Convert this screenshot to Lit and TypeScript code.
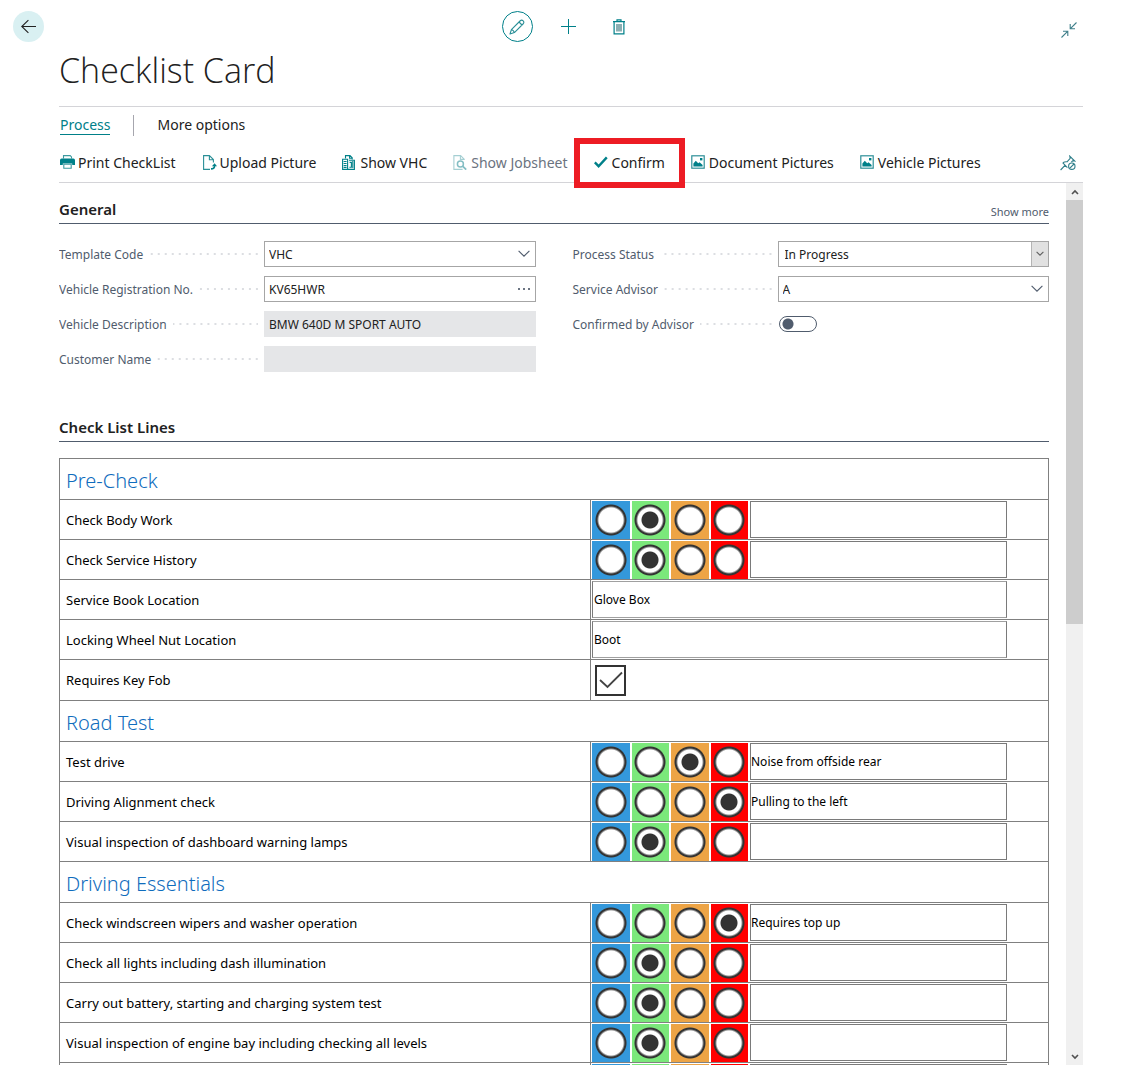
import { LitElement, html, css, TemplateResult } from "lit";
import { customElement, property, query } from "lit/decorators.js";
import { classMap } from "lit/directives/class-map.js";

const icons: Record<string, TemplateResult> = {
  back: html`<svg width="16" height="16" viewBox="0 0 16 16" fill="none" stroke="#222" stroke-width="1.1"><path d="M15 7.5H.8M7.4 1.2L.8 7.5L7.4 13.8" /></svg>`,
  pencil: html`<svg width="16" height="16" viewBox="0 0 16 16" fill="none" stroke="#2a8f97" stroke-width="1.1" stroke-linejoin="round"><path d="M1 15L2.4 10.6L11 2Q12.6 .4 14.2 1.8Q15.6 3.4 14 5L5.4 13.6ZM2.4 10.6Q4.6 11.4 5.4 13.6M10 3L13 6" /></svg>`,
  plus: html`<svg width="15" height="15" viewBox="0 0 15 15" stroke="#008089" stroke-width="1"><path d="M0 7.5H15M7.5 0V15" /></svg>`,
  trash: html`<svg width="13" height="16" viewBox="0 0 13 16" fill="none" stroke="#008089" stroke-width="1.2"><path d="M0 2.6H12M4 2.4V.8H8V2.4M1.1 3V14.9H10.9V3" /><path d="M4 5V12.4M6 5V12.4M8 5V12.4" stroke="#6f9ba0" stroke-width="1.6" /></svg>`,
  collapse: html`<svg width="16" height="16" viewBox="0 0 16 16" fill="none" stroke="#3f7f8a" stroke-width="1.1"><path d="M15.5 .5L9.4 6.6M9.2 2V6.8H14M.5 15.5L6.6 9.4M2 9.2H6.8V14" /></svg>`,
  print: html`<svg width="15" height="15" viewBox="0 0 15 15" fill="#008089"><path d="M3.5 3.5V.6H10.2L11.5 1.9V3.5" fill="none" stroke="#3d9aa0" stroke-width="1.1" /><path d="M1.6 3.6H13.4Q15 3.6 15 5.2V10H12.2V8.6H2.8V10H0V5.2Q0 3.6 1.6 3.6Z" /><path d="M3.8 9.2H11.2V13.2H3.8Z" fill="#fff" stroke="#3d9aa0" stroke-width="1.1" /></svg>`,
  upload: html`<svg width="15" height="15" viewBox="0 0 15 15" fill="none" stroke="#2a8f97" stroke-width="1.1"><path d="M8 14.4H1.6V.6H7.4L11.4 4.6V7.6M7.4 .8V4.8H11.2" /><path d="M9 13.9Q12.6 13.9 12.6 10.4" stroke="#008089" stroke-width="1.6" /><path d="M9.9 11.3L12.6 8.2L15 11.3Z" fill="#008089" stroke="none" /></svg>`,
  report: html`<svg width="15" height="15" viewBox="0 0 15 15" fill="none" stroke="#008089" stroke-width="1.1"><path d="M3.5 3.4V.6H8L10.2 2.8V4.4M7.6 .8V3.2H10" /><path d="M.6 4.2H5.6V14.4H.6Z" /><path d="M1.6 6.5H4.6M1.6 8.5H4.6M1.6 10.5H4.6M1.6 12.4H4.6" /><path d="M7 5.2H12.4V14.4H5.6M7.6 7.4H9.4V12.2H7.4M10.8 6V13" /></svg>`,
  preview: html`<svg width="15" height="15" viewBox="0 0 15 15" fill="none" stroke="#a5cfd3" stroke-width="1.1"><path d="M11.2 5V4.2L7.6 .6H.9V14.4H9.6M7.4 .8V4.4H11" /><circle cx="7.4" cy="9" r="3" stroke="#84bec4" stroke-width="1.5" /><path d="M9.6 11.2L13.2 14.6" stroke="#84bec4" stroke-width="1.8" /></svg>`,
  check: html`<svg width="15" height="15" viewBox="0 0 15 15" fill="none" stroke="#008089" stroke-width="2.4"><path d="M.8 7.4L4.6 11.2L12.8 2.4" /></svg>`,
  picture: html`<svg width="15" height="15" viewBox="0 0 15 15"><rect x=".8" y=".8" width="12.4" height="12.4" fill="#fff" stroke="#2d8f98" stroke-width="1.2" /><path d="M2.4 11.4V8.4L4.8 5.8L7.2 8.2L8.6 7.2L11.6 10V11.4Z" fill="#008089" /><rect x="9" y="3" width="2.4" height="2.4" fill="#008089" /></svg>`,
  pin: html`<svg width="16" height="16" viewBox="0 0 16 16" fill="none" stroke="#2f7f8a" stroke-width="1.1"><path d="M.6 15L5 10.4M2.6 7.6L7.4 12.6M2.8 7.8Q5 6.4 7 6.8L10.2 3.4L9.8 1.2L14.6 6L12.6 5.8L11.4 7.2" /><circle cx="11.8" cy="11.2" r="3.2" /><path d="M9.6 13.4L14 9" /></svg>`,
  chevron: html`<svg width="12" height="8" viewBox="0 0 12 8" fill="none" stroke="#505c6d" stroke-width="1.1"><path d="M.6 .8L6 6.2L11.4 .8" /></svg>`,
  smallChevron: html`<svg width="8" height="6" viewBox="0 0 8 6" fill="none" stroke="#606060" stroke-width="1.1"><path d="M.6 .8L4 4.2L7.4 .8" /></svg>`,
  dots: html`<svg width="12" height="2" viewBox="0 0 12 2" fill="#6b7482"><path d="M0 0H2V2H0ZM5 0H7V2H5ZM10 0H12V2H10Z" /></svg>`,
  scrollUp: html`<svg width="8" height="6" viewBox="0 0 8 6" fill="none" stroke="#505050" stroke-width="1.6"><path d="M1 5L4 2L7 5" /></svg>`,
  scrollDown: html`<svg width="8" height="6" viewBox="0 0 8 6" fill="none" stroke="#505050" stroke-width="1.6"><path d="M1 1L4 4L7 1" /></svg>`,
};

interface Action {
  icon: string;
  label: string;
  disabled?: boolean;
  marked?: boolean;
}

const actions: Action[] = [
  { icon: "print", label: "Print CheckList" },
  { icon: "upload", label: "Upload Picture" },
  { icon: "report", label: "Show VHC" },
  { icon: "preview", label: "Show Jobsheet", disabled: true },
  { icon: "check", label: "Confirm", marked: true },
  { icon: "picture", label: "Document Pictures" },
  { icon: "picture", label: "Vehicle Pictures" },
];

type Line =
  | { kind: "rating"; label: string; value: number; note?: string }
  | { kind: "text"; label: string; value: string }
  | { kind: "tick"; label: string; value: boolean };

interface Section {
  title: string;
  lines: Line[];
}

const sections: Section[] = [
  {
    title: "Pre-Check",
    lines: [
      { kind: "rating", label: "Check Body Work", value: 1 },
      { kind: "rating", label: "Check Service History", value: 1 },
      { kind: "text", label: "Service Book Location", value: "Glove Box" },
      { kind: "text", label: "Locking Wheel Nut Location", value: "Boot" },
      { kind: "tick", label: "Requires Key Fob", value: true },
    ],
  },
  {
    title: "Road Test",
    lines: [
      { kind: "rating", label: "Test drive", value: 2, note: "Noise from offside rear" },
      { kind: "rating", label: "Driving Alignment check", value: 3, note: "Pulling to the left" },
      { kind: "rating", label: "Visual inspection of dashboard warning lamps", value: 1 },
    ],
  },
  {
    title: "Driving Essentials",
    lines: [
      { kind: "rating", label: "Check windscreen wipers and washer operation", value: 3, note: "Requires top up" },
      { kind: "rating", label: "Check all lights including dash illumination", value: 1 },
      { kind: "rating", label: "Carry out battery, starting and charging system test", value: 1 },
      { kind: "rating", label: "Visual inspection of engine bay including checking all levels", value: 1 },
      { kind: "rating", label: "", value: -1 },
    ],
  },
];

const ratings = ["blue", "green", "amber", "red"];

@customElement("check-lines")
class CheckLines extends LitElement {
  @property({ attribute: false }) sections: Section[] = [];

  static styles = css`
    :host {
      display: block;
    }
    .lines {
      width: 100%;
      border-collapse: collapse;
      table-layout: fixed;
      font: 13px "Noto Sans", "Open Sans", sans-serif;
      color: #000;
    }
    .answers {
      width: 458px;
    }
    th,
    td {
      box-sizing: border-box;
      height: 40px;
      padding: 0 0 0 6px;
      border: 1px solid #808080;
      text-align: left;
      font-weight: 400;
    }
    .section {
      height: 41px;
      padding-top: 2px;
      font: 300 20px "Noto Sans", "Open Sans", sans-serif;
      color: #0f6cbd;
    }
    .answer {
      padding: 0 41px 0 1px;
    }
    .tick-cell {
      height: 41px;
      padding: 0 0 0 4px;
    }
    .group {
      display: flex;
      gap: 2px;
    }
    .ratings {
      display: flex;
      gap: 2px;
      width: 156px;
    }
    .swatch {
      display: grid;
      flex: 1;
      place-items: center;
      height: 38px;
    }
    .blue {
      background: #3498db;
    }
    .green {
      background: #7be87b;
    }
    .amber {
      background: #eda445;
    }
    .red {
      background: #f00;
    }
    .radio {
      appearance: none;
      width: 32px;
      height: 32px;
      margin: 0;
      background: radial-gradient(circle, #fff 12px, #333 14px, #333 15px, transparent 16px);
    }
    .radio:checked {
      background: radial-gradient(circle, #333 8px, #fff 9px, #fff 12px, #333 14px, #333 15px, transparent 16px);
    }
    .note {
      box-sizing: border-box;
      width: 100%;
      min-width: 0;
      height: 37px;
      padding: 0 1px;
      border: 1px solid #7a7a7a;
      border-radius: 0;
      background: #fff;
      font: 12px "Noto Sans", "Open Sans", sans-serif;
      color: #000;
    }
    .group .note {
      flex: 1;
      width: auto;
      padding: 0;
    }
    .wide {
      display: block;
      border-color: #a0a0a0 #7a7a7a;
    }
    .tick {
      display: block;
      appearance: none;
      box-sizing: border-box;
      width: 31px;
      height: 31px;
      margin: 0;
      border: 2px solid #333;
      background: #fff;
    }
    .tick-box {
      display: grid;
      width: 31px;
    }
    .tick-box > * {
      grid-area: 1 / 1;
    }
    .tick-mark {
      visibility: hidden;
      pointer-events: none;
    }
    .tick:checked + .tick-mark {
      visibility: visible;
    }
  `;

  private renderAnswer(line: Line, id: string) {
    if (line.kind === "rating") {
      return html`<td class="answer">
        <div class="group">
          <div class="ratings" role="radiogroup" aria-label=${line.label}>
            ${ratings.map(
              (name, i) => html`<label class="swatch ${name}">
                <input class="radio" type="radio" name=${id + "-rating"} aria-label=${name} ?checked=${line.value === i} />
              </label>`
            )}
          </div>
          <input class="note" id=${id} type="text" .value=${line.note ?? ""} />
        </div>
      </td>`;
    }
    if (line.kind === "text") {
      return html`<td class="answer"><input class="note wide" id=${id} type="text" .value=${line.value} /></td>`;
    }
    return html`<td class="tick-cell">
      <div class="tick-box">
        <input class="tick" id=${id} type="checkbox" ?checked=${line.value} />
        <svg class="tick-mark" width="31" height="31" viewBox="0 0 31 31" fill="none" stroke="#444" stroke-width="1.8">
          <path d="M5 15L12.5 22L27 7.5" />
        </svg>
      </div>
    </td>`;
  }

  render() {
    return html`<table class="lines">
      <colgroup>
        <col />
        <col class="answers" />
      </colgroup>
      ${this.sections.map(
        (section, s) => html`<tbody>
          <tr>
            <th class="section" colspan="2" scope="rowgroup">${section.title}</th>
          </tr>
          ${section.lines.map((line, l) => {
            const id = `line-${s}-${l}`;
            return html`<tr>
              <td><label for=${id}>${line.label}</label></td>
              ${this.renderAnswer(line, id)}
            </tr>`;
          })}
        </tbody>`
      )}
    </table>`;
  }
}

@customElement("app-root")
class AppRoot extends LitElement {
  @query(".content") private content!: HTMLElement;

  static styles = css`
    :host {
      display: flex;
      flex-direction: column;
      box-sizing: border-box;
      height: 100vh;
      overflow: hidden;
      background: #fff;
      color: #212121;
      font-family: "Noto Sans", "Open Sans", sans-serif;
    }
    button {
      display: flex;
      align-items: center;
      padding: 0;
      border: 0;
      background: none;
      font: inherit;
      color: inherit;
      cursor: pointer;
    }
    svg {
      display: block;
      flex: none;
    }
    .topbar {
      display: grid;
      grid-template-columns: 1fr auto 1fr;
      align-items: center;
      padding: 11px 63px 0 13px;
    }
    .round,
    .tool {
      justify-content: center;
      width: 31px;
      height: 31px;
    }
    .round {
      border-radius: 50%;
      background: #d9f0f2;
    }
    .tools {
      display: flex;
      gap: 20px;
      margin-left: 46px;
    }
    .editing {
      border: 1px solid #008089;
      border-radius: 50%;
    }
    .collapse {
      justify-self: end;
      padding-top: 6px;
    }
    .page {
      display: flex;
      flex: 1;
      flex-direction: column;
      min-height: 0;
      padding: 0 57px 0 59px;
    }
    h1 {
      margin: 0;
      padding: 4px 0 11px;
      border-bottom: 1px solid #d4d4d8;
      font: 300 34px/49px "Open Sans", "Noto Sans", sans-serif;
      color: #212121;
    }
    .tabs {
      display: flex;
      align-items: center;
      height: 36px;
      padding-left: 1px;
      gap: 23px;
      font-size: 14px;
    }
    .tab {
      border-bottom: 1px solid transparent;
      line-height: 19px;
    }
    .current {
      border-color: #008089;
      color: #008089;
    }
    .divider {
      width: 1px;
      height: 21px;
      background: #a6a6ae;
    }
    .actions {
      display: flex;
      align-items: center;
      height: 39px;
      padding: 0 7px 0 1px;
      gap: 26px;
      border-bottom: 1px solid #d4d4d8;
      font-size: 14px;
      line-height: 20px;
      white-space: nowrap;
    }
    .action {
      position: relative;
      gap: 3px;
    }
    .action:disabled {
      color: #6b7380;
      cursor: default;
    }
    .marked::after {
      content: "";
      position: absolute;
      inset: -15px -20px;
      border: 6px solid #ed1c24;
      pointer-events: none;
    }
    .pin {
      margin-left: auto;
    }
    .body {
      display: flex;
      flex: 1;
      min-height: 0;
      gap: 17px;
    }
    .content {
      flex: 1;
      min-width: 0;
      overflow-y: auto;
      scrollbar-width: none;
    }
    .heading {
      display: flex;
      align-items: center;
      justify-content: space-between;
      height: 22px;
      padding-bottom: 3px;
      border-bottom: 1px solid #505c6d;
    }
    .general {
      margin-top: 15px;
    }
    .list {
      margin: 44px 0 16px;
    }
    h2 {
      margin: 0;
      font: 600 15px/20px "Noto Sans", "Open Sans", sans-serif;
    }
    .more {
      padding-top: 4px;
      font-size: 11px;
      color: #505c6d;
    }
    .fields {
      display: grid;
      grid-template-columns: 1fr 1fr;
      column-gap: 37px;
      padding-top: 17px;
    }
    .column {
      display: flex;
      flex-direction: column;
      gap: 9px;
    }
    .field {
      display: grid;
      grid-template-columns: 205px 1fr;
      align-items: center;
      height: 26px;
      font-size: 12px;
    }
    .caption {
      display: flex;
      align-items: center;
      gap: 6px;
      padding-right: 6px;
      color: #505c6d;
      white-space: nowrap;
    }
    .caption::after {
      content: "";
      flex: 1;
      height: 2px;
      background: linear-gradient(90deg, transparent 5px, #dcdee2 5px) right / 7px 2px repeat-x;
    }
    .box {
      display: grid;
      grid-template-columns: 1fr auto;
      box-sizing: border-box;
      height: 26px;
      border: 1px solid #a6a6a6;
      background: #fff;
    }
    .box button {
      padding: 0 5px;
    }
    .value {
      box-sizing: border-box;
      width: 100%;
      min-width: 0;
      padding: 0 4px;
      border: 0;
      border-radius: 0;
      background: none;
      font: inherit;
      color: #212121;
    }
    .locked {
      height: 26px;
      padding: 0 5px;
      background: #e5e6e8;
    }
    .status {
      grid-area: 1 / 1 / 2 / 3;
      appearance: none;
      padding: 0 24px 0 6px;
    }
    .arrow {
      grid-area: 1 / 2;
      display: grid;
      place-items: center;
      width: 16px;
      border-left: 1px solid #b4b4b4;
      background: #e1e1e1;
      pointer-events: none;
    }
    .switch {
      appearance: none;
      box-sizing: border-box;
      width: 38px;
      height: 16px;
      margin: 0 1px;
      border: 1px solid #505c6d;
      border-radius: 8px;
      background: radial-gradient(circle at 8px 7px, #505c6d 5px, transparent 6px);
    }
    .switch:checked {
      background: radial-gradient(circle at 28px 7px, #505c6d 5px, transparent 6px);
    }
    .scrollbar {
      display: flex;
      flex-direction: column;
      width: 17px;
      background: #f0f0f0;
    }
    .scrollbar button {
      justify-content: center;
      height: 17px;
    }
    .track {
      flex: 1;
    }
    .thumb {
      height: 50%;
      background: #cdcdcd;
    }
  `;

  private scrollContent(by: number) {
    this.content.scrollBy({ top: by });
  }

  private renderAction(action: Action) {
    return html`<button class=${classMap({ action: true, marked: !!action.marked })} ?disabled=${!!action.disabled}>
      ${icons[action.icon]}<span>${action.label}</span>
    </button>`;
  }

  render() {
    return html`
      <header class="topbar">
        <button class="round" aria-label="Back">${icons.back}</button>
        <div class="tools">
          <button class="tool editing" aria-label="Edit">${icons.pencil}</button>
          <button class="tool" aria-label="New">${icons.plus}</button>
          <button class="tool" aria-label="Delete">${icons.trash}</button>
        </div>
        <button class="collapse" aria-label="Collapse">${icons.collapse}</button>
      </header>
      <main class="page">
        <h1>Checklist Card</h1>
        <nav class="tabs">
          <button class="tab current">Process</button>
          <span class="divider"></span>
          <button class="tab">More options</button>
        </nav>
        <div class="actions">
          ${actions.map((a) => this.renderAction(a))}
          <button class="pin" aria-label="Unpin">${icons.pin}</button>
        </div>
        <div class="body">
          <div class="content">
            <div class="heading general">
              <h2>General</h2>
              <button class="more">Show more</button>
            </div>
            <div class="fields">
              <div class="column">
                <div class="field">
                  <label class="caption" for="template">Template Code</label>
                  <div class="box">
                    <input class="value" id="template" type="text" value="VHC" />
                    <button aria-label="Choose template">${icons.chevron}</button>
                  </div>
                </div>
                <div class="field">
                  <label class="caption" for="registration">Vehicle Registration No.</label>
                  <div class="box">
                    <input class="value" id="registration" type="text" value="KV65HWR" />
                    <button aria-label="Look up vehicle">${icons.dots}</button>
                  </div>
                </div>
                <div class="field">
                  <label class="caption" for="description">Vehicle Description</label>
                  <input class="value locked" id="description" type="text" value="BMW 640D M SPORT AUTO" readonly />
                </div>
                <div class="field">
                  <label class="caption" for="customer">Customer Name</label>
                  <input class="value locked" id="customer" type="text" readonly />
                </div>
              </div>
              <div class="column">
                <div class="field">
                  <label class="caption" for="status">Process Status</label>
                  <div class="box">
                    <select class="value status" id="status">
                      <option>In Progress</option>
                    </select>
                    <span class="arrow">${icons.smallChevron}</span>
                  </div>
                </div>
                <div class="field">
                  <label class="caption" for="advisor">Service Advisor</label>
                  <div class="box">
                    <input class="value" id="advisor" type="text" value="A" />
                    <button aria-label="Choose advisor">${icons.chevron}</button>
                  </div>
                </div>
                <div class="field">
                  <label class="caption" for="confirmed">Confirmed by Advisor</label>
                  <input class="switch" id="confirmed" type="checkbox" role="switch" />
                </div>
              </div>
            </div>
            <div class="heading list"><h2>Check List Lines</h2></div>
            <check-lines .sections=${sections}></check-lines>
          </div>
          <div class="scrollbar">
            <button aria-label="Scroll up" @click=${() => this.scrollContent(-80)}>${icons.scrollUp}</button>
            <div class="track"><div class="thumb"></div></div>
            <button aria-label="Scroll down" @click=${() => this.scrollContent(80)}>${icons.scrollDown}</button>
          </div>
        </div>
      </main>
    `;
  }
}
